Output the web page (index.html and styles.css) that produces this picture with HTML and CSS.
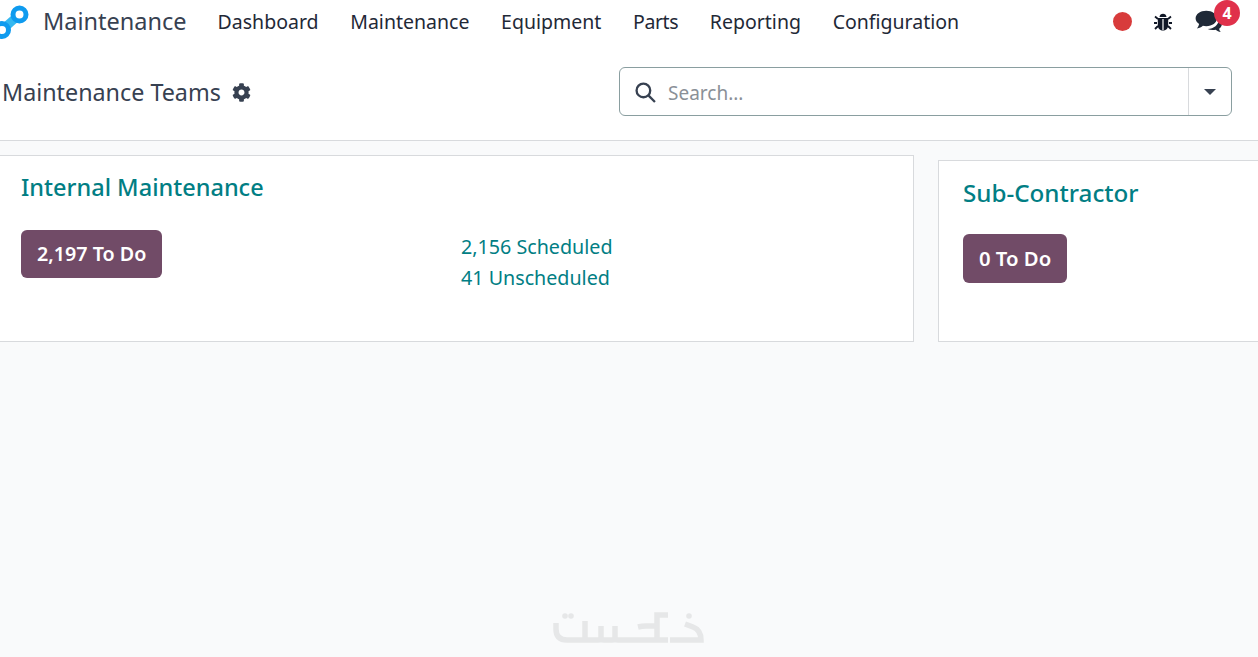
FILE: index.html
```html
<!DOCTYPE html>
<html lang="en">
<head>
<meta charset="utf-8">
<title>Maintenance Teams</title>
<link rel="stylesheet" href="styles.css">
</head>
<body>
<div class="page">
  <header class="navbar">
    <svg class="logo" viewBox="0 0 30 40" aria-hidden="true">
      <path class="logo-link" d="M19.500 12.500 2 28"/>
      <circle class="logo-ring" cx="19.500" cy="12.500" r="6.500"/>
      <circle class="logo-ring" cx="2" cy="28" r="6.500"/>
    </svg>
    <span class="brand">Maintenance</span>
    <nav class="menu">
      <a>Dashboard</a><a>Maintenance</a><a>Equipment</a><a class="tight">Parts</a><a>Reporting</a><a>Configuration</a>
    </nav>
    <div class="systray">
      <span class="rec-dot"></span>
      <svg class="bug" viewBox="0 0 20 20" aria-hidden="true">
        <path class="bug-legs" d="M5 7 2 4.500M15 7l3-2.500M4 11H1M16 11h3M5 14l-3 3M15 14l3 3"/>
        <path class="bug-body" d="M6.500 5c0-4.500 7-4.500 7 0zM4.800 6h10.400v7c0 4-2.500 5.500-5.200 5.500S4.800 17 4.800 13z"/>
        <path class="bug-line" d="M10 7v11"/>
      </svg>
      <span class="chat">
        <svg class="comments" viewBox="0 0 30 26" aria-hidden="true">
          <path class="bubble" d="M12 2c6.500 0 11.500 3.700 11.500 8.300S18.500 18.600 12 18.600c-1.300 0-2.500-.1-3.600-.4C6.800 19.600 4.600 20.600 2 21c1.200-1.400 2-3 2.300-4.800C1.900 14.700.5 12.600.5 10.300.5 5.700 5.500 2 12 2z"/>
          <path class="bubble" d="M25 10.500c2.700 1.400 4 3.500 4 5.700 0 2-1.100 3.800-3 5.100.2 1.400.9 2.800 2 3.700-2.400-.3-4.300-1.200-5.800-2.500-1 .2-2 .3-3.200.3-2 0-3.900-.4-5.400-1.100 6.700-.3 11.900-4.400 11.900-10 0-.7-.2-1.400-.5-2.200z"/>
        </svg>
        <span class="badge">4</span>
      </span>
    </div>
  </header>

  <section class="control-panel">
    <div class="title-group">
      <h1 class="page-title">Maintenance Teams</h1>
      <svg class="gear" viewBox="0 0 512 512" aria-hidden="true"><path d="M487.400 315.700l-42.600-24.600c4.300-23.200 4.300-47 0-70.200l42.600-24.600c4.900-2.800 7.100-8.600 5.500-14-11.100-35.600-30-67.800-54.700-94.600-3.800-4.100-10-5.100-14.800-2.300L380.800 110c-17.900-15.400-38.500-27.300-60.800-35.100V25.800c0-5.600-3.900-10.500-9.400-11.700-36.700-8.200-74.300-7.800-109.200 0-5.500 1.200-9.400 6.100-9.400 11.700V75c-22.200 7.900-42.800 19.800-60.800 35.100L88.700 85.500c-4.900-2.800-11-1.900-14.800 2.300-24.700 26.700-43.600 58.900-54.700 94.600-1.700 5.400.6 11.200 5.500 14L67.300 221c-4.300 23.200-4.300 47 0 70.200l-42.600 24.600c-4.900 2.800-7.100 8.600-5.500 14 11.100 35.600 30 67.800 54.700 94.600 3.800 4.100 10 5.100 14.800 2.300l42.600-24.600c17.900 15.400 38.500 27.300 60.800 35.100v49.200c0 5.600 3.900 10.500 9.400 11.700 36.700 8.200 74.300 7.800 109.200 0 5.500-1.200 9.400-6.100 9.400-11.700v-49.200c22.200-7.900 42.800-19.800 60.800-35.100l42.600 24.600c4.900 2.800 11 1.900 14.800-2.300 24.700-26.700 43.600-58.900 54.700-94.600 1.500-5.500-.7-11.300-5.600-14.100zM256 336c-44.100 0-80-35.900-80-80s35.900-80 80-80 80 35.900 80 80-35.900 80-80 80z"/></svg>
    </div>
    <div class="search">
      <svg class="search-icon" viewBox="0 0 20 20" aria-hidden="true"><circle cx="8" cy="8" r="6.500"/><path d="m13 13 6 6"/></svg>
      <span class="placeholder">Search...</span>
      <span class="search-toggle"><span class="caret"></span></span>
    </div>
  </section>

  <main class="kanban">
    <article class="card card-main">
      <h2 class="card-title">Internal Maintenance</h2>
      <div class="card-body">
        <div class="card-action"><a class="todo">2,197 To Do</a></div>
        <div class="stats"><a>2,156 Scheduled</a><a>41 Unscheduled</a></div>
      </div>
    </article>
    <article class="card card-sub">
      <h2 class="card-title">Sub-Contractor</h2>
      <div class="card-body">
        <div class="card-action"><a class="todo">0 To Do</a></div>
      </div>
    </article>
  </main>

  <svg class="watermark" viewBox="0 0 200 57" role="img" aria-label="watermark logo">
    <circle cx="35" cy="16" r="2.800"/><circle cx="41" cy="16" r="2.800"/><circle cx="159" cy="16" r="2.800"/>
    <path d="M26 23v6q0 11 11 11h18V21M55 40h13q3 0 3-3V26M71 37q0 3 3 3h8q3 0 3-3V26M85 37q0 3 3 3h50M127 40V15h11M108 27q4-1 8-1h11M140 40h31q0-10-8-13l-8-3"/>
  </svg>
</div>
</body>
</html>
```

FILE: styles.css
```css
* { box-sizing: border-box; }
html, body { margin: 0; height: 100%; }
body {
  font-family: "Noto Sans", "Open Sans", sans-serif;
  color: #1f2937;
  background: #f9fafb;
  overflow: hidden;
}
.page { position: relative; width: 1258px; height: 657px; overflow: hidden; }

.navbar {
  display: flex;
  align-items: center;
  height: 46px;
  padding-bottom: 4px;
  background: #fff;
}
.logo { width: 30px; height: 40px; margin-right: 13px; margin-top: 2px; flex: none; }
.logo-link { stroke: #35b8f0; stroke-width: 9; fill: none; }
.logo-ring { fill: #fff; stroke: #0f9bef; stroke-width: 5; }
.brand { font-size: 23.500px; color: #374151; margin-right: 31px; }
.menu { display: flex; gap: 31.700px; font-size: 19.500px; color: #1f2937; }
.tight { letter-spacing: -0.400px; }
.systray { margin-left: auto; display: flex; align-items: center; padding-right: 18px; }
.rec-dot { width: 19px; height: 19px; border-radius: 50%; background: #d83b3b; margin-right: 21px; margin-top: 1px; }
.bug { width: 20px; height: 20px; margin-right: 22px; margin-top: 1px; }
.bug-legs { stroke: #111827; stroke-width: 1.800; fill: none; }
.bug-body { fill: #111827; }
.bug-line { stroke: #fff; stroke-width: 1.200; }
.chat { position: relative; width: 30px; height: 26px; margin-right: 15px; }
.comments { width: 28px; height: 24px; display: block; margin-top: 1px; }
.bubble { fill: #1f2937; }
.badge {
  position: absolute;
  top: -8px;
  left: 19px;
  width: 26px;
  height: 26px;
  border-radius: 50%;
  background: #e0314b;
  color: #fff;
  font-size: 16px;
  font-weight: 700;
  display: flex;
  align-items: center;
  justify-content: center;
}

.control-panel {
  display: flex;
  align-items: center;
  justify-content: space-between;
  height: 95px;
  padding: 0 26px 3px 3px;
  background: #fff;
  border-bottom: 1px solid #d8dadd;
}
.title-group { display: flex; align-items: center; gap: 11px; }
.page-title { margin: 0; font-size: 23.300px; font-weight: 400; color: #374151; margin-left: -1px; }
.gear { width: 19px; height: 19px; fill: #374151; margin-top: 1px; }
.search {
  display: flex;
  align-items: center;
  width: 613px;
  height: 49px;
  border: 1px solid #8a9ea0;
  border-radius: 6px;
  padding-left: 15px;
}
.search-icon { width: 21px; height: 21px; fill: none; stroke: #374151; stroke-width: 2.200; margin-right: 12px; margin-top: 1px; }
.placeholder { flex: 1; font-size: 19px; color: #8a9097; padding-top: 2px; }
.search-toggle {
  display: flex;
  align-items: center;
  justify-content: center;
  width: 43px;
  height: 100%;
  border-left: 1px solid #d8dadd;
}
.caret { border-style: solid; border-width: 6px 6.500px 0; border-color: #374151 transparent transparent; }

.kanban {
  display: flex;
  align-items: flex-end;
  gap: 24px;
  margin: 14px 0 0 -1px;
}
.card { flex: none; background: #fff; border: 1px solid #d8dadd; }
.card-main { width: 915px; height: 187px; padding: 15px 0 0 21px; }
.card-sub { width: 400px; height: 182px; padding: 15px 0 0 24px; }
.card-title { margin: 0; font-size: 23.500px; font-weight: 500; color: #017e84; line-height: 33px; }
.card-sub .card-title { font-size: 24.200px; }
.card-body { display: flex; margin-top: 26px; }
.card-sub .card-body { margin-top: 25px; }
.card-action { width: 440px; flex: none; }
.todo {
  display: inline-block;
  height: 48px;
  padding: 0 16px;
  line-height: 48px;
  font-size: 19.700px;
  font-weight: 600;
  color: #fff;
  background: #714b67;
  border-radius: 6px;
}
.card-sub .todo { height: 49px; line-height: 49px; font-size: 20.300px; }
.stats { display: flex; flex-direction: column; font-size: 19.700px; line-height: 31px; color: #017e84; padding-top: 1px; }

.watermark { position: absolute; left: 530px; top: 600px; width: 200px; height: 57px; }
.watermark path { fill: none; stroke: #e6e7e8; stroke-width: 5.500; }
.watermark circle { fill: #e6e7e8; }
```
